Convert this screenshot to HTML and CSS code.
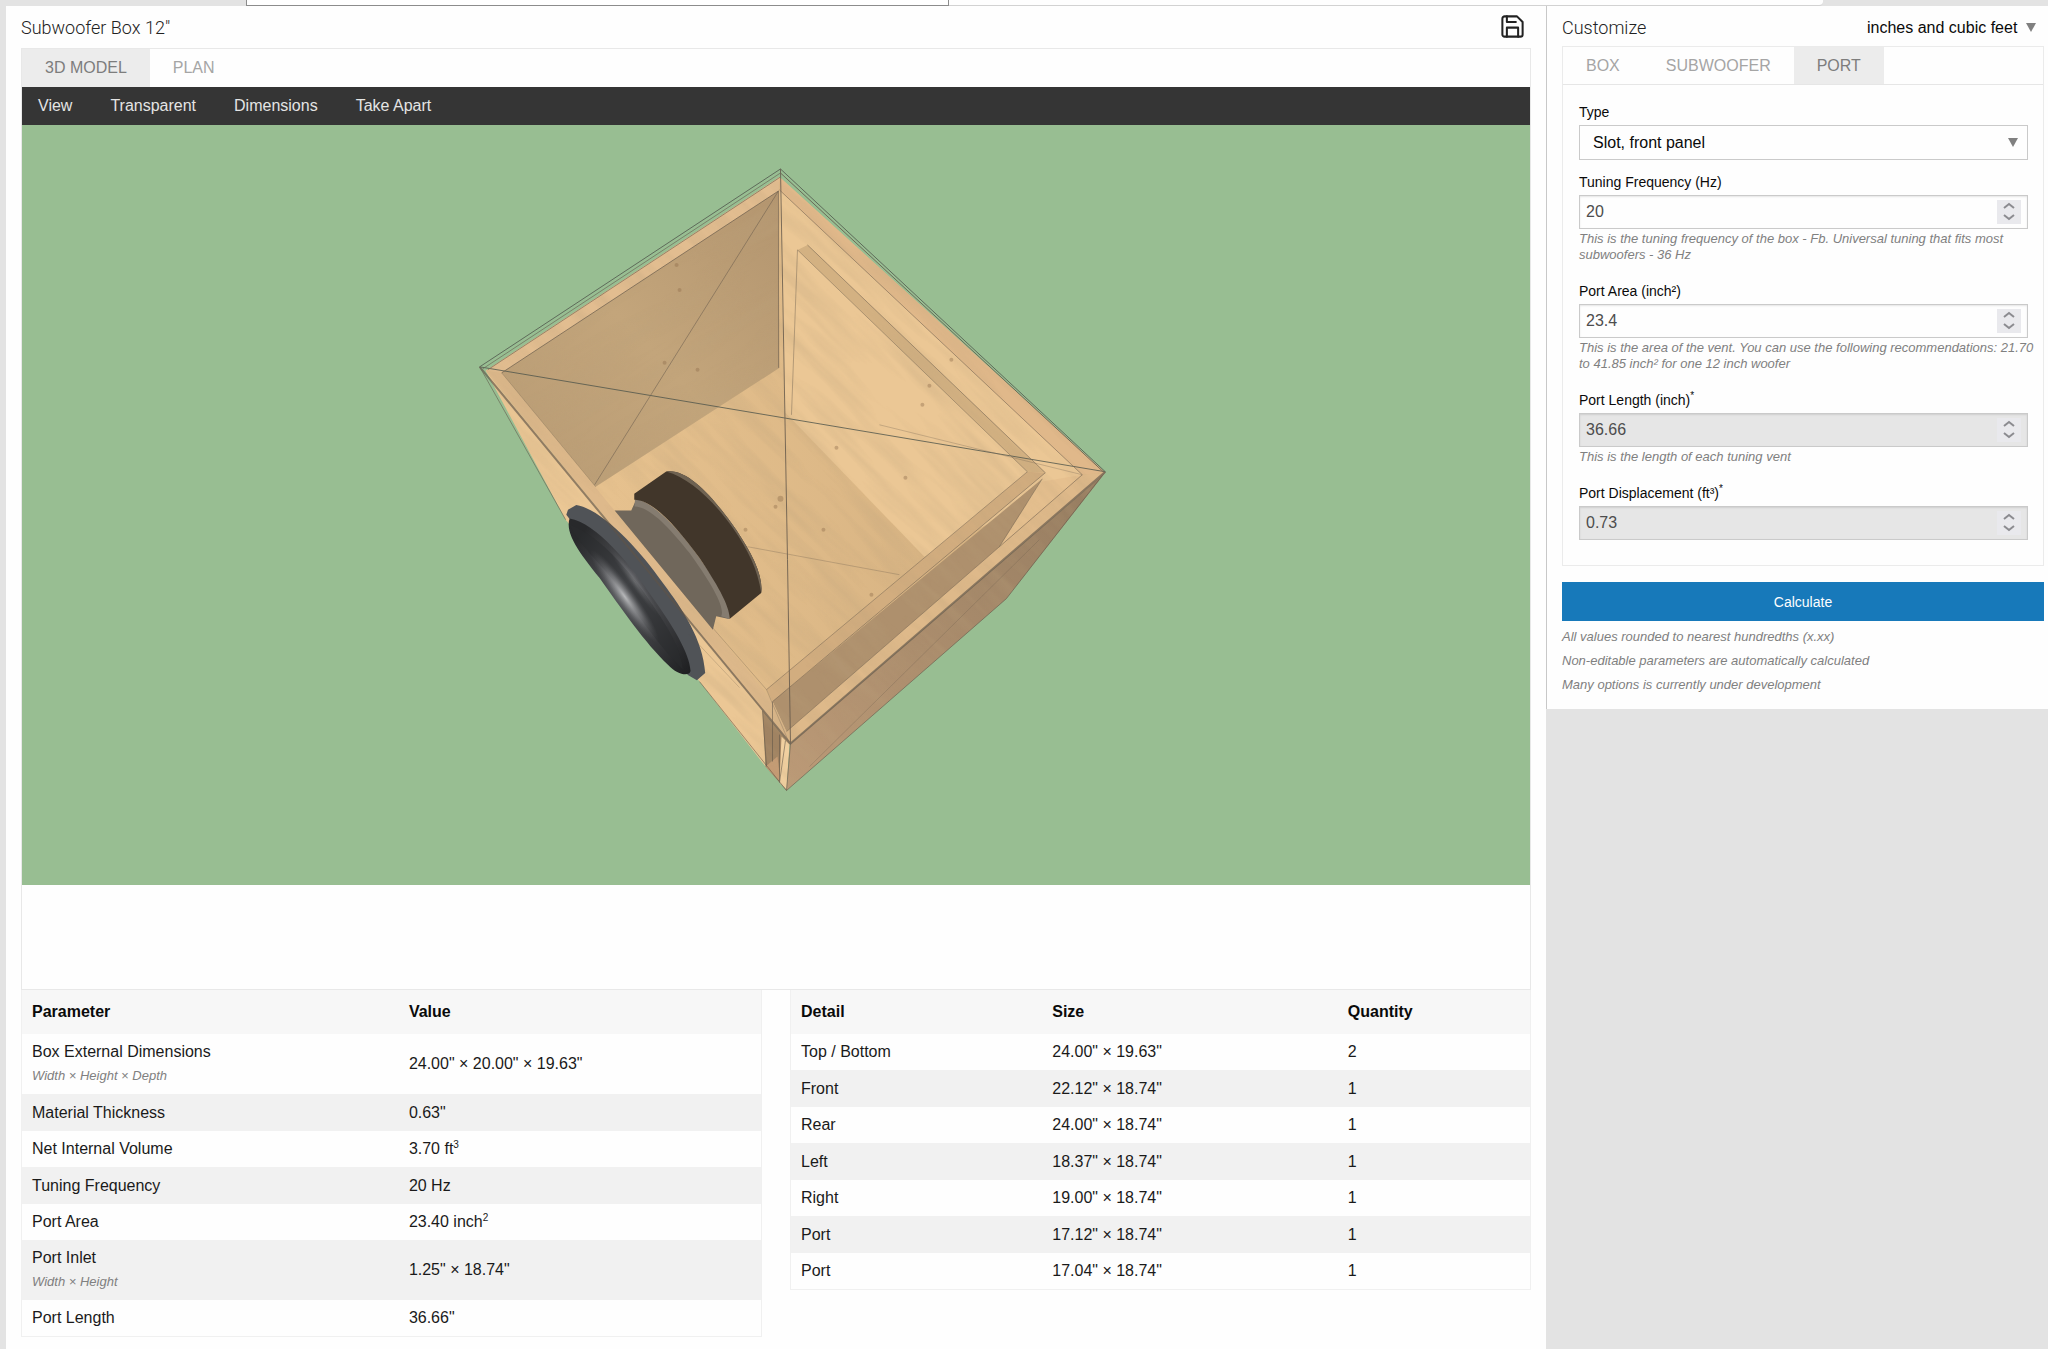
FILE: index.html
```html
<!DOCTYPE html>
<html lang="en">
<head>
<meta charset="UTF-8">
<meta name="viewport" content="width=device-width, initial-scale=1.0">
<title>Subwoofer Box 12"</title>
<link rel="stylesheet" href="styles.css">
</head>
<body>

<div class="topbar">
    <div class="topbar-active"></div>
    <div class="topbar-rest"></div>
</div>

<div class="layout">
    <main class="main">
        <div class="heading">
            <h1>Subwoofer Box 12"</h1>
            <button class="save-btn" aria-label="Save">
                <svg viewBox="0 0 24 24" width="27" height="27" fill="none" stroke="currentColor" stroke-width="1.8" stroke-linecap="round" stroke-linejoin="round">
                    <path d="M19 21H5a2 2 0 0 1-2-2V5a2 2 0 0 1 2-2h11l5 5v11a2 2 0 0 1-2 2z"/>
                    <path d="M17 21v-8H7v8"/>
                    <path d="M7 3v5h8"/>
                </svg>
            </button>
        </div>

        <div class="viewer">
            <div class="tabs">
                <button class="tab active">3D MODEL</button>
                <button class="tab">PLAN</button>
            </div>
            <div class="toolbar">
                <button>View</button>
                <button>Transparent</button>
                <button>Dimensions</button>
                <button>Take Apart</button>
            </div>
            <svg class="scene" viewBox="22 125 1509 761">
                <defs>
                    <linearGradient id="cone" x1="0" y1="0" x2="1" y2="1">
                        <stop offset="0.1" stop-color="#28292b"/>
                        <stop offset="0.45" stop-color="#55565a"/>
                        <stop offset="0.65" stop-color="#434447"/>
                        <stop offset="1" stop-color="#1d1e20"/>
                    </linearGradient>
                    <radialGradient id="shine">
                        <stop offset="0" stop-color="#b8b9bb"/>
                        <stop offset="0.5" stop-color="#8a8b8e" stop-opacity="0.6"/>
                        <stop offset="1" stop-color="#5a5b5e" stop-opacity="0"/>
                    </radialGradient>
                    <linearGradient id="backWall" x1="1" y1="0" x2="0" y2="1">
                        <stop offset="0" stop-color="#b3956f"/>
                        <stop offset="0.5" stop-color="#c3a57b"/>
                        <stop offset="1" stop-color="#b89b74"/>
                    </linearGradient>
                    <linearGradient id="floor" x1="0" y1="0" x2="1" y2="0">
                        <stop offset="0.2" stop-color="#e6c18e"/>
                        <stop offset="0.7" stop-color="#d9b584"/>
                    </linearGradient>
                    <linearGradient id="sideFace" x1="1" y1="0" x2="0" y2="1">
                        <stop offset="0" stop-color="#957c60"/>
                        <stop offset="1" stop-color="#bc9a77"/>
                    </linearGradient>
                    <filter id="grain" x="0" y="0" width="1" height="1">
                        <feTurbulence type="fractalNoise" baseFrequency="0.008 0.07" numOctaves="3" seed="4"/>
                        <feColorMatrix values="0 0 0 0 0.5  0 0 0 0 0.36  0 0 0 0 0.2  0 2.4 0 0 -0.95"/>
                    </filter>
                    <clipPath id="boxShape">
                        <path d="M780 177 486 371 566 520 700 682 787 791 1007 599 1106 473z"/>
                    </clipPath>
                    <clipPath id="backShape">
                        <path d="M779 191 502 373 596 487 780 368z"/>
                    </clipPath>
                    <clipPath id="coneShape">
                        <path d="M90 206C170 220 270 340 340 445C400 530 450 610 453 664C450 680 415 678 385 645C320 585 240 470 180 385C120 310 75 250 90 206z"/>
                    </clipPath>
                </defs>

                <rect x="22" y="125" width="1509" height="761" fill="#98be92"/>

                <!-- box panels -->
                <path d="M780 177 486 371 790 744 1106 473z" fill="url(#floor)"/>
                <path d="M780 190 1083 475 925 557 785 412z" fill="#ebc795"/>
                <path d="M780 177 486 371 502 373 779 191z" fill="#e2bd90"/>
                <path d="M780 177 1106 473 1083 475 780 190z" fill="#e0b88a"/>
                <path d="M798 250 808 245 1046 473 1028 472z" fill="#d3b182"/>
                <path d="M1028 472 1046 473 773 702 767 690z" fill="#d2ad7f"/>
                <path d="M1042 482 1083 475 1000 547z" fill="#e6c08f"/>
                <path d="M1043 479 1000 547 787 732 773 702z" fill="#ae906d"/>
                <path d="M1083 475 1106 473 791 744 787 732z" fill="#deb98a"/>
                <path d="M1106 473 791 744 787 791 1007 599z" fill="url(#sideFace)"/>
                <path d="M486 371 566 520 700 682 766 767 764 712z" fill="#ebc795"/>
                <path d="M486 371 502 373 615 511 713 628 773 702 787 732 790 744z" fill="#deb98b"/>
                <path d="M763 711 790 744 787 791 766 767z" fill="#a08362"/>
                <path d="M766 767 778 757 781 783z" fill="#c59b74"/>
                <path d="M782 737 790 745 787 790 780 783z" fill="#f1d0a0"/>

                <!-- wood texture -->
                <g clip-path="url(#boxShape)">
                    <rect x="350" y="100" width="950" height="850" filter="url(#grain)" opacity="0.24" transform="rotate(44 790 480)"/>
                </g>
                <path d="M779 191 502 373 596 487 780 368z" fill="url(#backWall)"/>
                <g clip-path="url(#backShape)">
                    <rect x="400" y="100" width="520" height="500" filter="url(#grain)" opacity="0.26" transform="rotate(-32 640 340)"/>
                </g>
                <g fill="#8f6d4b" opacity="0.4">
                    <circle cx="677" cy="265" r="2"/>
                    <circle cx="680" cy="290" r="2"/>
                    <circle cx="665" cy="363" r="2"/>
                    <circle cx="698" cy="370" r="2"/>
                    <circle cx="952" cy="360" r="2"/>
                    <circle cx="930" cy="386" r="2"/>
                    <circle cx="923" cy="405" r="2"/>
                    <circle cx="776" cy="507" r="2"/>
                    <circle cx="781" cy="499" r="3"/>
                    <circle cx="746" cy="530" r="2"/>
                    <circle cx="824" cy="530" r="2"/>
                    <circle cx="872" cy="595" r="2"/>
                    <circle cx="906" cy="478" r="2"/>
                    <circle cx="837" cy="448" r="2"/>
                </g>

                <!-- speaker -->
                <svg x="540" y="450" width="300" height="350" viewBox="0 0 900 1050">
                    <path d="M225 182H275L290 149C330 150 430 260 480 335C540 420 570 480 568 508L530 500 520 540z" fill="#70675b"/>
                    <path d="M285 170 286 150C330 145 420 240 480 325C540 410 575 470 570 508L545 500C560 470 500 380 450 310C390 235 330 170 285 170z" fill="#857c70"/>
                    <path d="M380 65C450 55 530 155 590 240C640 315 672 380 665 430L570 508C572 470 530 400 480 325C410 230 340 150 284 150L284 132z" fill="#41362a"/>
                    <path d="M380 65C450 55 530 155 590 240C640 315 672 380 665 430C655 360 625 300 580 235C520 150 450 85 380 65z" fill="#6e6252"/>
                    <path d="M80 195 85 180 110 166C190 180 300 300 370 400C430 480 490 570 497 670L472 692 445 676z" fill="#505357"/>
                    <path d="M90 206C170 220 270 340 340 445C400 530 450 610 453 664C450 680 415 678 385 645C320 585 240 470 180 385C120 310 75 250 90 206z" fill="url(#cone)"/>
                    <g clip-path="url(#coneShape)">
                        <path d="M90 225C190 260 290 390 345 475C400 555 425 610 430 660C370 600 310 520 250 430C195 350 120 290 90 225z" fill="#2a2b2d" opacity="0.5"/>
                        <ellipse cx="255" cy="440" rx="170" ry="30" fill="url(#shine)" transform="rotate(54 255 440)"/>
                        <ellipse cx="285" cy="395" rx="130" ry="16" fill="url(#shine)" opacity="0.35" transform="rotate(54 285 395)"/>
                    </g>
                </svg>

                <!-- edges -->
                <g fill="none" stroke="#5f5448" stroke-width="1" opacity="0.8">
                    <path d="M781 169 480 367 1106 472z" stroke="#4f554b"/>
                    <path d="M781 169 788 560 791 744"/>
                    <path d="M781 177 488 370M781 173 483 369" opacity="0.7"/>
                    <path d="M781 173 1104 472"/>
                    <path d="M779 191 502 373" opacity="0.8"/>
                    <path d="M779 191 595 485M779 191V368" opacity="0.6"/>
                    <path d="M780 190 1083 475 787 732" opacity="0.6"/>
                    <path d="M792 415 798 250 1028 472 767 690" opacity="0.5"/>
                    <path d="M808 245 1046 473 773 702" opacity="0.6"/>
                    <path d="M1043 479 1000 547" opacity="0.5"/>
                    <path d="M748 547 900 575M880 425 1083 475" opacity="0.35"/>
                    <path d="M502 373 596 487M713 628 767 690 790 744" opacity="0.35"/>
                    <path d="M480 367 566 520M700 682 787 791 1007 599 1106 472" opacity="0.7"/>
                    <path d="M791 744 787 791M763 711 767 767M773 702V762M780 735V783M786 741 780 783" opacity="0.7"/>
                    <path d="M810 767 1040 540M690 635 740 688" opacity="0.3"/>
                    <path d="M480 367 791 744 1106 472" stroke-width="2" opacity="0.8"/>
                </g>
            </svg>
        </div>

        <div class="tables">
            <table class="params">
                <thead>
                    <tr><th>Parameter</th><th>Value</th></tr>
                </thead>
                <tbody>
                    <tr><td>Box External Dimensions<small>Width × Height × Depth</small></td><td>24.00" × 20.00" × 19.63"</td></tr>
                    <tr><td>Material Thickness</td><td>0.63"</td></tr>
                    <tr><td>Net Internal Volume</td><td>3.70 ft<sup>3</sup></td></tr>
                    <tr><td>Tuning Frequency</td><td>20 Hz</td></tr>
                    <tr><td>Port Area</td><td>23.40 inch<sup>2</sup></td></tr>
                    <tr><td>Port Inlet<small>Width × Height</small></td><td>1.25" × 18.74"</td></tr>
                    <tr><td>Port Length</td><td>36.66"</td></tr>
                </tbody>
            </table>
            <table class="details">
                <thead>
                    <tr><th>Detail</th><th>Size</th><th>Quantity</th></tr>
                </thead>
                <tbody>
                    <tr><td>Top / Bottom</td><td>24.00" × 19.63"</td><td>2</td></tr>
                    <tr><td>Front</td><td>22.12" × 18.74"</td><td>1</td></tr>
                    <tr><td>Rear</td><td>24.00" × 18.74"</td><td>1</td></tr>
                    <tr><td>Left</td><td>18.37" × 18.74"</td><td>1</td></tr>
                    <tr><td>Right</td><td>19.00" × 18.74"</td><td>1</td></tr>
                    <tr><td>Port</td><td>17.12" × 18.74"</td><td>1</td></tr>
                    <tr><td>Port</td><td>17.04" × 18.74"</td><td>1</td></tr>
                </tbody>
            </table>
        </div>
    </main>

    <aside class="sidebar">
        <div class="heading">
            <h2>Customize</h2>
            <div class="select units">
                <select aria-label="Units">
                    <option>inches and cubic feet</option>
                </select>
            </div>
        </div>

        <div class="panel">
            <div class="tabs">
                <button class="tab">BOX</button>
                <button class="tab">SUBWOOFER</button>
                <button class="tab active">PORT</button>
            </div>
            <form class="fields">
                <div class="field">
                    <label for="type">Type</label>
                    <div class="select boxed">
                        <select id="type">
                            <option>Slot, front panel</option>
                        </select>
                    </div>
                </div>
                <div class="field">
                    <label for="tuning">Tuning Frequency (Hz)</label>
                    <div class="number">
                        <input type="number" id="tuning" value="20">
                        <svg class="spin" viewBox="0 0 24 24"><path d="M7 8l5-4 5 4M7 15l5 4 5-4"/></svg>
                    </div>
                    <p class="hint">This is the tuning frequency of the box - Fb. Universal tuning that fits most subwoofers - 36 Hz</p>
                </div>
                <div class="field">
                    <label for="area">Port Area (inch²)</label>
                    <div class="number">
                        <input type="number" id="area" value="23.4" step="any">
                        <svg class="spin" viewBox="0 0 24 24"><path d="M7 8l5-4 5 4M7 15l5 4 5-4"/></svg>
                    </div>
                    <p class="hint">This is the area of the vent. You can use the following recommendations: 21.70 to 41.85 inch² for one 12 inch woofer</p>
                </div>
                <div class="field">
                    <label for="length">Port Length (inch)<sup>*</sup></label>
                    <div class="number readonly">
                        <input type="number" id="length" value="36.66" step="any" readonly>
                        <svg class="spin" viewBox="0 0 24 24"><path d="M7 8l5-4 5 4M7 15l5 4 5-4"/></svg>
                    </div>
                    <p class="hint">This is the length of each tuning vent</p>
                </div>
                <div class="field">
                    <label for="displacement">Port Displacement (ft³)<sup>*</sup></label>
                    <div class="number readonly">
                        <input type="number" id="displacement" value="0.73" step="any" readonly>
                        <svg class="spin" viewBox="0 0 24 24"><path d="M7 8l5-4 5 4M7 15l5 4 5-4"/></svg>
                    </div>
                </div>
            </form>
        </div>

        <button class="calculate">Calculate</button>
        <div class="notes">
            <p>All values rounded to nearest hundredths (x.xx)</p>
            <p>Non-editable parameters are automatically calculated</p>
            <p>Many options is currently under development</p>
        </div>
    </aside>
</div>

</body>
</html>
```
FILE: styles.css
```css
* {
    box-sizing: border-box;
}
body {
    margin: 0;
    background-color: #e3e3e3;
    color: #1a1a1a;
    font-family: "Liberation Sans", Arial, sans-serif;
    font-size: 16px;
    min-height: 100vh;
    display: flex;
    flex-direction: column;
}
button, input, select {
    font: inherit;
    color: inherit;
    border: none;
    background: none;
    padding: 0;
    margin: 0;
}
button {
    cursor: pointer;
}
p {
    margin: 0;
}
sup {
    font-size: 10px;
    line-height: 0;
}

/* strip above the page */
.topbar {
    display: flex;
    height: 6px;
    padding-left: 12%;
    padding-right: 11%;
}
.topbar-active {
    flex: 45;
    background-color: #fff;
    border: 1px solid #8c8c8c;
    border-top: none;
}
.topbar-rest {
    flex: 56;
    background-color: #fefefe;
    border-bottom: 1px solid #d2d2d2;
    border-bottom-right-radius: 4px;
}

.layout {
    display: flex;
    flex: 1;
    padding-left: 6px;
}
.main {
    flex: 1;
    background-color: #fefefe;
    padding: 0 15px 12px;
}
.sidebar {
    width: 502px;
    align-self: flex-start;
    background-color: #fefefe;
    border-left: 1px solid #c8c8c8;
    padding: 0 4px 12px 15px;
}

.heading {
    display: flex;
    justify-content: space-between;
    align-items: center;
    height: 42px;
}
h1, h2 {
    margin: 0;
    font-family: Roboto, "Open Sans", sans-serif;
    font-size: 18px;
    font-weight: 300;
    color: #222;
}
.save-btn {
    display: flex;
    margin-right: 5px;
    padding-bottom: 2px;
    color: #222;
}

.viewer {
    border: 1px solid #e8e8e8;
    padding-bottom: 104px;
}
.tabs {
    display: flex;
}
.tab {
    height: 38px;
    padding: 0 23px;
    color: #a5a5a5;
}
.tab.active {
    background-color: #ececec;
    color: #7d7d7d;
}
.toolbar {
    display: flex;
    gap: 38px;
    height: 38px;
    padding: 0 16px;
    background-color: #353535;
    color: #e4e4e4;
}
.scene {
    display: block;
    width: 100%;
}

/* result tables */
.tables {
    display: flex;
    align-items: flex-start;
    gap: 28px;
}
table {
    flex: 1;
    border-spacing: 0;
    border: 1px solid #f0f0f0;
    border-top: none;
    table-layout: fixed;
}
th {
    height: 44px;
    padding: 0 10px;
    background-color: #f7f7f7;
    color: #0a0a0a;
    text-align: left;
}
td {
    height: 36px;
    padding: 6px 10px;
    line-height: 24px;
}
tbody tr:nth-child(even) td {
    height: 37px;
    background-color: #f1f1f1;
}
td small {
    display: block;
    font-size: 13px;
    font-style: italic;
    color: #808080;
}
.params th:first-child {
    width: 51%;
}
.details th:first-child {
    width: 34%;
}
.details th:nth-child(2) {
    width: 40%;
}

/* sidebar form */
.select {
    display: grid;
    align-items: center;
}
.select select {
    grid-area: 1 / 1;
    appearance: none;
    color: #0a0a0a;
}
.select::after {
    content: "";
    grid-area: 1 / 1;
    justify-self: end;
    pointer-events: none;
    border: 5px solid transparent;
    border-top: 9px solid #808080;
    border-bottom: none;
}
.units {
    margin-right: 8px;
}
.units select {
    padding-right: 18px;
}
.boxed {
    height: 35px;
    border: 1px solid #cacaca;
    padding-right: 9px;
}
.boxed select {
    height: 33px;
    padding-left: 13px;
}
.sidebar .heading {
    height: 40px;
    padding-top: 3px;
}
.panel {
    border: 1px solid #ebebeb;
}
.panel .tabs {
    border-bottom: 1px solid #e6e6e6;
}
.panel .tab {
    height: 37px;
}
.fields {
    padding: 15px 15px 25px 16px;
}
.field {
    margin-bottom: 16px;
}
.field:first-child {
    margin-bottom: 10px;
}
.field:last-child {
    margin-bottom: 0;
}
.field label {
    display: block;
    font-size: 14px;
    line-height: 25px;
    color: #0a0a0a;
}
.number {
    display: flex;
    align-items: center;
    height: 34px;
    border: 1px solid #cacaca;
    box-shadow: inset 0 1px 2px rgba(10, 10, 10, 0.1);
    padding: 0 6px;
    color: #4d4d4d;
}
.number input {
    flex: 1;
    min-width: 0;
    outline: none;
    appearance: textfield;
}
.number input::-webkit-inner-spin-button {
    appearance: none;
}
.spin {
    width: 24px;
    height: 24px;
    background-color: #e9e9ed;
    fill: none;
    stroke: #8b8b90;
    stroke-width: 2;
}
.readonly {
    background-color: #e6e6e6;
}
.hint {
    margin: 2px -10px 0 0;
    font-size: 13px;
    font-style: italic;
    line-height: 16px;
    color: #808080;
}
.calculate {
    display: block;
    width: 100%;
    height: 39px;
    margin-top: 16px;
    background-color: #1779ba;
    color: #fefefe;
    font-size: 14px;
}
.notes {
    margin-top: 4px;
    font-size: 13px;
    font-style: italic;
    line-height: 24px;
    color: #808080;
}
```
